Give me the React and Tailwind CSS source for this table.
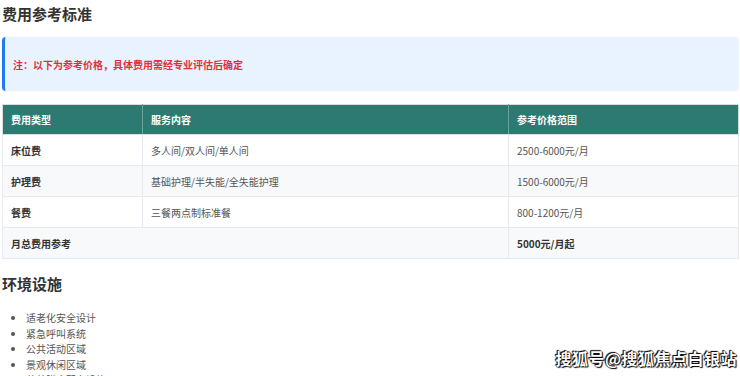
import React from "react";

const rows = [
  { type: "床位费", content: "多人间/双人间/单人间", price: "2500-6000元/月", bg: "bg-white" },
  { type: "护理费", content: "基础护理/半失能/全失能护理", price: "1500-6000元/月", bg: "bg-[#f8f9fb]" },
  { type: "餐费", content: "三餐两点制标准餐", price: "800-1200元/月", bg: "bg-white" },
];

const facilities = ["适老化安全设计", "紧急呼叫系统", "公共活动区域", "景观休闲区域", "营养膳食配套设施"];

export default function App() {
  return (
    <div
      className="relative h-[376px] w-[740px] overflow-hidden bg-white pl-[2px] pr-[1px] text-[#333]"
      style={{ fontFamily: '"Noto Sans CJK SC", "Noto Sans", sans-serif' }}
    >
      <h2 className="pt-[3px] text-[15px] font-bold leading-[22px] text-[#333]">费用参考标准</h2>

      <div className="mt-[12px] flex h-[54px] items-center rounded-[4px] border-l-[3px] border-[#1a7cf0] bg-[#e8f3ff] pl-[8px]">
        <p className="text-[10px] font-bold text-[#e0303b]">注：以下为参考价格，具体费用需经专业评估后确定</p>
      </div>

      <table className="mt-[13px] w-full border-collapse text-[10px]">
        <thead>
          <tr className="h-[30px] bg-[#2c7a72] text-left text-white">
            <th className="w-[140px] border border-[#d8dde3] border-r-[#6aa39c] pl-[8px] font-bold">费用类型</th>
            <th className="w-[366px] border border-[#d8dde3] border-r-[#6aa39c] pl-[8px] font-bold">服务内容</th>
            <th className="border border-[#d8dde3] pl-[8px] font-bold">参考价格范围</th>
          </tr>
        </thead>
        <tbody>
          {rows.map((r) => (
            <tr key={r.type} className={`h-[31px] ${r.bg}`}>
              <td className="border border-[#e6e9ee] pl-[8px] font-bold text-[#333]">{r.type}</td>
              <td className="border border-[#e6e9ee] pl-[8px] text-[#555]">{r.content}</td>
              <td className="border border-[#e6e9ee] pl-[8px] text-[#555]">{r.price}</td>
            </tr>
          ))}
          <tr className="h-[31px] bg-[#f8f9fb]">
            <td colSpan={2} className="border border-[#e6e9ee] pl-[8px] font-bold text-[#333]">月总费用参考</td>
            <td className="border border-[#e6e9ee] pl-[8px] font-bold text-[#333]">5000元/月起</td>
          </tr>
        </tbody>
      </table>

      <h2 className="mt-[14px] text-[15px] font-bold leading-[22px] text-[#333]">环境设施</h2>

      <ul className="mt-[15px] list-disc pl-[24px] text-[10px] leading-[15.5px] text-[#555]">
        {facilities.map((f) => (
          <li key={f}>{f}</li>
        ))}
      </ul>

      <div
        className="absolute bottom-[6px] right-[3px] text-[16px] font-bold tracking-[0.5px] text-white"
        style={{ textShadow: "0 0 1px #000, 0 0 1px #000, 1px 1px 1px #000, -1px -1px 1px #000" }}
      >
        搜狐号@搜狐焦点白银站
      </div>
    </div>
  );
}
